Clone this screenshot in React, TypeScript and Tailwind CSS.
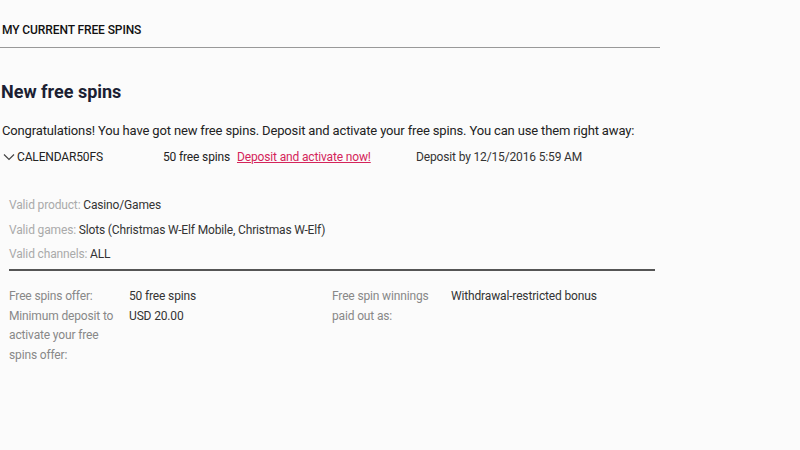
const FONT = "font-['Roboto',_'Liberation_Sans',_sans-serif]";

function Chevron() {
  return (
    <svg width="12" height="8" viewBox="0 0 12 8" className="mr-[2px]">
      <path d="M1 1.5 L6 6.5 L11 1.5" fill="none" stroke="#444" strokeWidth="1.2" />
    </svg>
  );
}

export default function App() {
  return (
    <div className={`${FONT} w-[800px] h-[450px] bg-[#fbfbfb] text-[#222] overflow-hidden tracking-[-0.15px]`}>
      <div className="w-[660px]">
        <div className="h-[48px] border-b border-[#999] flex items-end pb-[11px] pl-[2px]">
          <h1 className="text-[12px] font-medium text-[#111] leading-none tracking-[-0.1px]">MY CURRENT FREE SPINS</h1>
        </div>

        <h2 className="mt-[33px] pl-[1px] text-[18px] font-bold text-[#1c1f33] leading-[22px] tracking-normal">New free spins</h2>

        <p className="mt-[20px] pl-[2px] text-[13px] leading-[16px] text-[#222] whitespace-nowrap">
          Congratulations! You have got new free spins. Deposit and activate your free spins. You can use them right away:
        </p>

        <div className="mt-[10px] flex items-center text-[12px] leading-[16px] text-[#222] whitespace-nowrap">
          <div className="w-[163px] flex items-center pl-[3px]">
            <Chevron />
            <span>CALENDAR50FS</span>
          </div>
          <span className="w-[74px]">50 free spins</span>
          <a className="w-[179px] text-[#d4245a] underline">Deposit and activate now!</a>
          <span className="text-[#333]">Deposit by 12/15/2016 5:59 AM</span>
        </div>

        <div className="mt-[32px] ml-[9px] w-[646px] border-b-2 border-[#555] pb-[7px] text-[12px] leading-[16px]">
          <div className="flex flex-col gap-[8.5px]">
            <div><span className="text-[#aaa]">Valid product: </span><span className="text-[#333]">Casino/Games</span></div>
            <div><span className="text-[#aaa]">Valid games: </span><span className="text-[#333]">Slots (Christmas W-Elf Mobile, Christmas W-Elf)</span></div>
            <div><span className="text-[#aaa]">Valid channels: </span><span className="text-[#333]">ALL</span></div>
          </div>
        </div>

        <div className="mt-[16px] ml-[9px] flex text-[12px] leading-[19.5px]">
          <div className="w-[323px] grid grid-cols-[120px_1fr] content-start">
            <div className="text-[#888]">Free spins offer:</div>
            <div className="text-[#333]">50 free spins</div>
            <div className="text-[#888]">Minimum deposit to activate your free spins offer:</div>
            <div className="text-[#333]">USD 20.00</div>
          </div>
          <div className="grid grid-cols-[119px_1fr] content-start">
            <div className="text-[#888]">Free spin winnings paid out as:</div>
            <div className="text-[#333]">Withdrawal-restricted bonus</div>
          </div>
        </div>
      </div>
    </div>
  );
}
